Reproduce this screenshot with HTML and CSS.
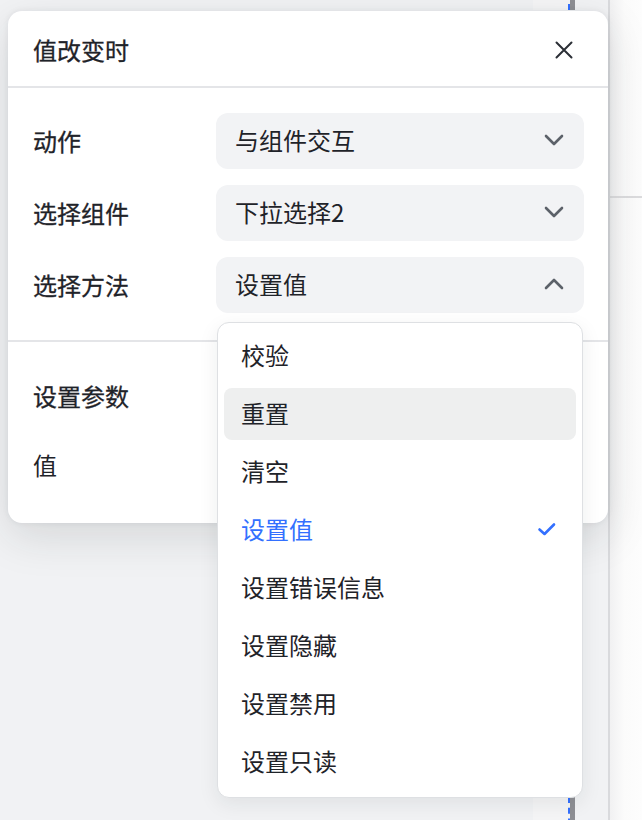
FILE: index.html
```html
<!DOCTYPE html>
<html lang="zh-CN">
<head>
    <meta charset="UTF-8">
    <title>值改变时</title>
    <link rel="stylesheet" href="styles.css">
</head>
<body>
<div class="workspace">
    <div class="canvas">
        <!-- 画布上被选中的组件（只露出一部分） -->
        <div class="widget widget-top"><span class="thumb"></span></div>
        <div class="widget widget-bottom"><span class="thumb"></span></div>
    </div>
    <aside class="sidebar">
        <div class="sidebar-head"></div>
    </aside>
</div>

<div class="modal">
    <div class="modal-head">
        <span class="modal-title">值改变时</span>
        <button class="close" type="button">
            <svg width="20" height="20" viewBox="0 0 20 20"><path d="M2.5 2.5 L17.5 17.5 M17.5 2.5 L2.5 17.5" stroke="#2b2f36" stroke-width="2" stroke-linecap="round" fill="none"/></svg>
        </button>
    </div>

    <div class="form">
        <div class="row">
            <span class="label">动作</span>
            <div class="select">
                <span>与组件交互</span>
                <svg class="arrow" width="20" height="12" viewBox="0 0 20 12"><path d="M2 2 L10 10 L18 2" stroke="#5c6169" stroke-width="2.6" stroke-linecap="round" stroke-linejoin="round" fill="none"/></svg>
            </div>
        </div>
        <div class="row">
            <span class="label">选择组件</span>
            <div class="select">
                <span>下拉选择2</span>
                <svg class="arrow" width="20" height="12" viewBox="0 0 20 12"><path d="M2 2 L10 10 L18 2" stroke="#5c6169" stroke-width="2.6" stroke-linecap="round" stroke-linejoin="round" fill="none"/></svg>
            </div>
        </div>
        <div class="row">
            <span class="label">选择方法</span>
            <div class="select-wrap">
                <div class="select">
                    <span>设置值</span>
                    <svg class="arrow" width="20" height="12" viewBox="0 0 20 12"><path d="M2 10 L10 2 L18 10" stroke="#5c6169" stroke-width="2.6" stroke-linecap="round" stroke-linejoin="round" fill="none"/></svg>
                </div>
                <ul class="dropdown">
                    <li>校验</li>
                    <li class="hover">重置</li>
                    <li>清空</li>
                    <li class="selected">设置值
                        <svg width="20" height="16" viewBox="0 0 20 16"><path d="M2.5 8.5 L7.5 13 L17 3.5" stroke="#3370ff" stroke-width="2.6" stroke-linecap="round" stroke-linejoin="round" fill="none"/></svg>
                    </li>
                    <li>设置错误信息</li>
                    <li>设置隐藏</li>
                    <li>设置禁用</li>
                    <li>设置只读</li>
                </ul>
            </div>
        </div>
    </div>

    <div class="params">
        <div class="param-row"><span class="label">设置参数</span></div>
        <div class="param-row"><span class="label label-light">值</span></div>
    </div>
</div>
</body>
</html>
```

FILE: styles.css
```css
*{
    margin: 0;
    padding: 0;
    box-sizing: border-box;
    list-style-type: none;
}
body{
    width: 642px;
    height: 820px;
    overflow: hidden;
    position: relative;
    background: #f1f2f4;
    font-family: "Noto Sans CJK SC", "Inter", sans-serif;
    color: #1f2329;
}

/* 背景：画布 + 右侧栏 */
.workspace{
    display: flex;
    height: 820px;
}
.canvas{
    flex: 1;
    position: relative;
    background: #f1f2f4;
}
.widget{
    position: absolute;
    left: 533px;
    width: 37px;
    background: #f5f5f6;
    border-right: 2px dashed #3370ff;
}
.widget .thumb{
    position: absolute;
    top: 0;
    bottom: 0;
    right: -7px;
    width: 5px;
    background: #8e8f94;
}
.widget-top{
    top: -40px;
    height: 50px;
}
.widget-bottom{
    top: 797px;
    height: 60px;
}
.sidebar{
    width: 34px;
    border-left: 2px solid #d9dadd;
    background: linear-gradient(to right, #f1f1f2, #fbfbfb 45%, #fdfdfd);
}
.sidebar-head{
    height: 198px;
    border-bottom: 2px solid #dcdcde;
}

/* 弹窗 */
.modal{
    position: absolute;
    left: 8px;
    top: 11px;
    width: 600px;
    height: 512px;
    background: #fff;
    border-radius: 14px;
    box-shadow: 0 0 6px rgba(31, 35, 41, 0.07), 0 14px 44px rgba(31, 35, 41, 0.13);
}
.modal-head{
    height: 77px;
    display: flex;
    align-items: center;
    justify-content: space-between;
    padding: 2px 34px 0 25px;
    border-bottom: 2px solid #e4e5e8;
}
.modal-title{
    font-size: 24px;
    font-weight: 400;
    line-height: 1;
    -webkit-text-stroke: 0.3px #1f2329;
}
.close{
    border: none;
    background: none;
    width: 20px;
    height: 20px;
    display: flex;
}

.form{
    display: flex;
    flex-direction: column;
    gap: 16px;
    padding: 25px 24px 27px 25px;
    border-bottom: 2px solid #e4e5e8;
}
.row{
    display: grid;
    grid-template-columns: 183px 1fr;
    align-items: center;
}
.label{
    font-size: 24px;
    font-weight: 400;
    line-height: 1;
    -webkit-text-stroke: 0.3px #1f2329;
}
.label-light{
    -webkit-text-stroke: 0;
}
.select-wrap{
    position: relative;
}
.select{
    height: 56px;
    background: #f2f3f5;
    border-radius: 12px;
    display: flex;
    align-items: center;
    justify-content: space-between;
    padding: 0 20px 2px 19px;
    font-size: 24px;
    line-height: 1;
}

/* 下拉菜单 */
.dropdown{
    position: absolute;
    top: 65px;
    left: 1px;
    right: 1px;
    background: #fff;
    border: 1px solid #dee0e3;
    border-radius: 12px;
    padding: 7px 6px 9px;
    display: flex;
    flex-direction: column;
    gap: 6px;
    box-shadow: 0 6px 20px rgba(31, 35, 41, 0.08);
    z-index: 10;
}
.dropdown li{
    height: 52px;
    display: flex;
    align-items: center;
    justify-content: space-between;
    padding: 0 19px 2px 17px;
    border-radius: 8px;
    font-size: 24px;
    line-height: 1;
}
.dropdown li.hover{
    background: #eeefef;
}
.dropdown li.selected{
    color: #3370ff;
}

.params{
    display: flex;
    flex-direction: column;
    gap: 13px;
    padding: 26px 24px 0 25px;
}
.param-row{
    height: 56px;
    display: flex;
    align-items: center;
}
```
